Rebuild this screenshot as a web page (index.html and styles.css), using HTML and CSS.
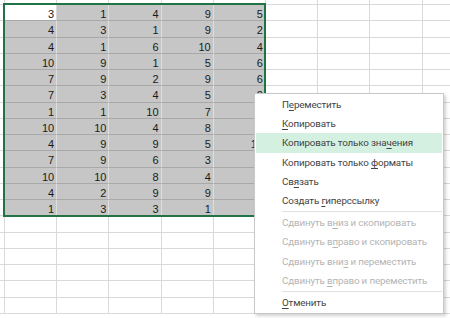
FILE: index.html
```html
<!DOCTYPE html>
<html lang="ru">
<head>
    <meta charset="UTF-8">
    <title>Лист1</title>
    <link rel="stylesheet" href="styles.css">
</head>
<body>
    <div class="sheet">
        <div class="grid" id="grid"></div>
        <div class="selection"></div>

        <div class="menu">
            <div class="item">П<u>е</u>реместить</div>
            <div class="item"><u>К</u>опировать</div>
            <div class="item active">Копировать только зна<u>ч</u>ения</div>
            <div class="item">Копировать только <u>ф</u>орматы</div>
            <div class="item">Св<u>я</u>зать</div>
            <div class="item">Создать <u>г</u>иперссылку</div>
            <div class="sep"></div>
            <div class="item disabled">Сдвинуть в<u>н</u>из и скопировать</div>
            <div class="item disabled">Сдвинуть в<u>п</u>раво и скопировать</div>
            <div class="item disabled">Сдвинуть вни<u>з</u> и переместить</div>
            <div class="item disabled">Сдвинуть <u>в</u>право и переместить</div>
            <div class="sep"></div>
            <div class="item"><u>О</u>тменить</div>
        </div>
    </div>

    <script>
        const data = [
            [3, 1, 4, 9, 5],
            [4, 3, 1, 9, 2],
            [4, 1, 6, 10, 4],
            [10, 9, 1, 5, 6],
            [7, 9, 2, 9, 6],
            [7, 3, 4, 5, 2],
            [1, 1, 10, 7, 3],
            [10, 10, 4, 8, 5],
            [4, 9, 9, 5, 10],
            [7, 9, 6, 3, 8],
            [10, 10, 8, 4, 2],
            [4, 2, 9, 9, 7],
            [1, 3, 3, 1, 6]
        ];
        const ROWS = 20, COLS = 10;
        let html = "";

        for (let r = 0; r < ROWS; r++) {
            for (let c = 0; c < COLS; c++) {
                let row = data[r - 1];
                let value = row && c >= 1 && c <= 5 ? row[c - 1] : "";
                let cls = "cell";
                if (value !== "") cls += r === 1 && c === 1 ? " current" : " sel";
                html += `<div class="${cls}">${value}</div>`;
            }
        }
        document.getElementById("grid").innerHTML = html;
    </script>
</body>
</html>
```

FILE: styles.css
```css
* {
    margin: 0;
    padding: 0;
    box-sizing: border-box;
}

body {
    background: #fff;
    overflow: hidden;
}

.sheet {
    position: relative;
    width: 450px;
    height: 318px;
    overflow: hidden;
}

.grid {
    display: grid;
    grid-template-columns: 5px repeat(9, 52.2px);
    grid-template-rows: 5px repeat(19, 16.25px);
    font-family: "Liberation Sans", Arial, sans-serif;
    font-size: 11px;
    color: #1a1a1a;
}

.cell {
    border-right: 1px solid #d9d9d9;
    border-bottom: 1px solid #d9d9d9;
    text-align: right;
    padding-right: 2px;
    padding-top: 3px;
    line-height: 12px;
}

.cell.sel {
    background: #c6c6c6;
    border-right-color: #dedede;
    border-bottom-color: #a9a9a9;
}

.cell.current {
    background: #fff;
    border-bottom-color: #a9a9a9;
}

.selection {
    position: absolute;
    left: 3px;
    top: 3px;
    width: 263px;
    height: 214px;
    border: 2.5px solid #217346;
}

.menu {
    position: absolute;
    left: 254px;
    top: 93px;
    width: 190px;
    height: 221px;
    background: #fff;
    border: 1px solid #c8c8c8;
    box-shadow: 2px 2px 3px rgba(0, 0, 0, 0.18);
    padding: 1px 1px 0 1px;
    font-family: Roboto, "Noto Sans", sans-serif;
    font-size: 9.8px;
    letter-spacing: -0.15px;
    color: #444;
}

.item {
    height: 19.2px;
    line-height: 19.2px;
    padding-left: 26px;
    white-space: nowrap;
}

.item u {
    text-underline-offset: 2px;
}

.item.active {
    background: #d3f0e0;
}

.item.disabled {
    color: #b4b4b4;
}

.sep {
    height: 3px;
    margin-left: 26px;
    border-bottom: 1px solid #e1e1e1;
    margin-bottom: 1px;
    margin-top: -1px;
}
```
